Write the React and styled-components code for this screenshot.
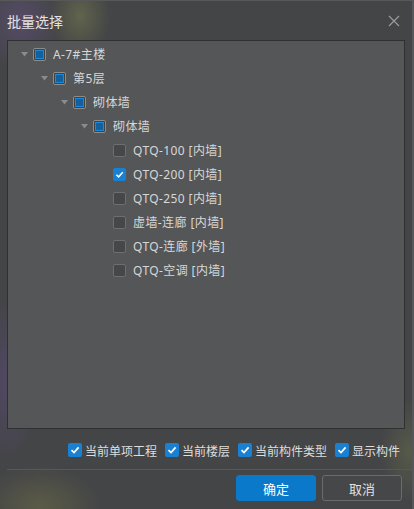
import React, { useState } from 'react';
import styled, { createGlobalStyle } from 'styled-components';

const GlobalStyle = createGlobalStyle`
  html, body {
    margin: 0;
    padding: 0;
    background: #3c3d3f;
  }
  body {
    font-family: "Noto Sans CJK SC", "Noto Sans", sans-serif;
  }
`;

const Dialog = styled.div`
  width: 414px;
  height: 509px;
  box-sizing: border-box;
  display: flex;
  flex-direction: column;
  border-top: 1px solid #56585a;
  border-right: 2px solid #55575a;
  background:
    radial-gradient(ellipse 40px 50px at 20px 20px, rgba(100, 80, 130, 0.55), transparent),
    radial-gradient(ellipse 30px 40px at 80px 15px, rgba(120, 125, 80, 0.55), transparent),
    radial-gradient(ellipse 30px 80px at 8px 380px, rgba(95, 75, 130, 0.5), transparent),
    radial-gradient(ellipse 60px 40px at 40px 505px, rgba(110, 110, 70, 0.55), transparent),
    radial-gradient(ellipse 30px 50px at 410px 450px, rgba(110, 115, 75, 0.45), transparent),
    #444547;
  color: #dcdcdc;
`;

const Header = styled.div`
  height: 39px;
  display: flex;
  align-items: center;
  justify-content: space-between;
  padding: 0 11px 0 7px;
`;

const Title = styled.span`
  font-size: 14px;
  color: #e2e2e2;
`;

const Close = styled.button`
  border: none;
  background: none;
  padding: 0;
  width: 14px;
  height: 14px;
  display: flex;
  cursor: pointer;
`;

const Panel = styled.div`
  margin: 0 7px 0 7px;
  height: 389px;
  box-sizing: border-box;
  border: 1px solid #2f3031;
  background: #545657;
  padding-top: 1px;
`;

const Row = styled.div`
  height: 24px;
  display: flex;
  align-items: center;
  padding-left: ${(p) => 13 + p.depth * 20}px;
  font-family: "Noto Sans", "Noto Sans CJK SC", sans-serif;
  font-size: 12px;
  letter-spacing: 0.4px;
  color: #d8d8d8;
`;

const Caret = styled.span`
  width: 7px;
  height: 5px;
  margin-right: 5px;
  display: inline-flex;
`;

const Box = styled.span`
  width: 13px;
  height: 13px;
  box-sizing: border-box;
  border-radius: 2px;
  flex-shrink: 0;
  display: inline-flex;
  align-items: center;
  justify-content: center;
  margin-right: 7px;
  border: 1px solid ${(p) => (p.checked ? '#1a80d2' : p.partial ? '#8d8d8d' : '#6e6e6e')};
  background: ${(p) => (p.checked ? '#1a80d2' : p.partial ? '#3e4042' : '#464748')};
`;

const Inner = styled.span`
  width: 9px;
  height: 9px;
  box-sizing: border-box;
  background: #13609e;
  border: 1px solid #2288d8;
`;

const Footer = styled.div`
  display: flex;
  justify-content: flex-end;
  align-items: center;
  gap: 8px;
  padding: 11px 12px 0 0;
  height: 20px;
`;

const Option = styled.label`
  display: flex;
  align-items: center;
  gap: 3px;
  font-size: 12px;
  color: #dedede;
`;

const BlueBox = styled.span`
  width: 14px;
  height: 14px;
  border-radius: 2px;
  background: #1a80d2;
  display: inline-flex;
  align-items: center;
  justify-content: center;
`;

const Divider = styled.div`
  margin: 9px 0 0 7px;
  height: 1px;
  background: #56585a;
`;

const Actions = styled.div`
  display: flex;
  justify-content: flex-end;
  gap: 6px;
  padding: 5px 10px 0 0;
`;

const Button = styled.button`
  width: 80px;
  height: 26px;
  box-sizing: border-box;
  border-radius: 3px;
  font-family: inherit;
  font-size: 13px;
  cursor: pointer;
  border: 1px solid ${(p) => (p.primary ? '#0a79c9' : '#6a6b6d')};
  background: ${(p) => (p.primary ? '#0a79c9' : '#464749')};
  color: ${(p) => (p.primary ? '#ffffff' : '#e0e0e0')};
`;

const Check = ({ size = 9 }) => (
  <svg width={size} height={size} viewBox="0 0 10 10">
    <path d="M1.5 5.2 L4 7.6 L8.6 2.4" fill="none" stroke="#fff" strokeWidth="1.7" />
  </svg>
);

const tree = [
  { depth: 0, label: 'A-7#主楼', parent: true },
  { depth: 1, label: '第5层', parent: true },
  { depth: 2, label: '砌体墙', parent: true },
  { depth: 3, label: '砌体墙', parent: true },
  { depth: 4, label: 'QTQ-100 [内墙]' },
  { depth: 4, label: 'QTQ-200 [内墙]', checked: true },
  { depth: 4, label: 'QTQ-250 [内墙]' },
  { depth: 4, label: '虚墙-连廊 [内墙]' },
  { depth: 4, label: 'QTQ-连廊 [外墙]' },
  { depth: 4, label: 'QTQ-空调 [内墙]' },
];

const options = ['当前单项工程', '当前楼层', '当前构件类型', '显示构件'];

const App = () => {
  const [items] = useState(tree);
  return (
    <>
      <GlobalStyle />
      <Dialog>
        <Header>
          <Title>批量选择</Title>
          <Close>
            <svg width="14" height="14" viewBox="0 0 14 14">
              <path d="M2 2 L12 12 M12 2 L2 12" stroke="#9a9b9c" strokeWidth="1.2" />
            </svg>
          </Close>
        </Header>
        <Panel>
          {items.map((item, i) => (
            <Row key={i} depth={item.depth}>
              <Caret>
                {item.parent && (
                  <svg width="7" height="5" viewBox="0 0 7 5">
                    <path d="M0 0 L7 0 L3.5 4.5 Z" fill="#8a8b8c" />
                  </svg>
                )}
              </Caret>
              <Box partial={item.parent} checked={item.checked}>
                {item.parent && <Inner />}
                {item.checked && <Check />}
              </Box>
              {item.label}
            </Row>
          ))}
        </Panel>
        <Footer>
          {options.map((o) => (
            <Option key={o}>
              <BlueBox>
                <Check size={10} />
              </BlueBox>
              {o}
            </Option>
          ))}
        </Footer>
        <Divider />
        <Actions>
          <Button primary>确定</Button>
          <Button>取消</Button>
        </Actions>
      </Dialog>
    </>
  );
};

export default App;
